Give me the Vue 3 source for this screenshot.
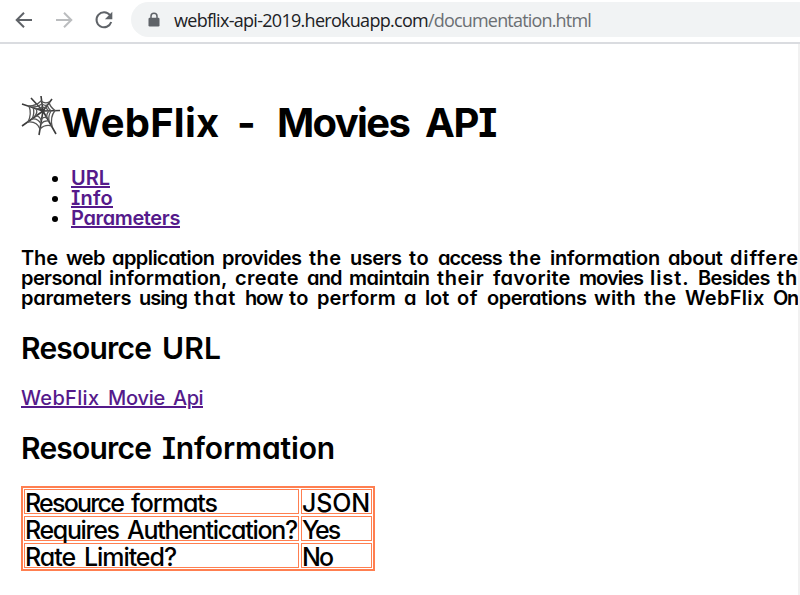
<script setup>
import { h, nextTick, onMounted } from 'vue'

// A line of text whose words take the given widths, trailing space included.
const Fit = (props) => {
  const words = props.text.split(' ')
  return h(
    'span',
    words.map((word, i) =>
      h('span', { 'data-width': props.widths[i] }, i < words.length - 1 ? `${word} ` : word),
    ),
  )
}
Fit.props = ['text', 'widths']

const links = [
  { text: 'URL', widths: [39] },
  { text: 'Info', widths: [42] },
  { text: 'Parameters', widths: [109] },
]
const intro = [
  {
    text: 'The web application provides the users to access the information about differe',
    widths: [45, 46, 110, 87, 41, 59, 29, 71, 41, 118, 62, 69],
  },
  {
    text: 'personal information, create and maintain their favorite movies list. Besides th',
    widths: [88, 126, 72, 42, 88, 56, 86, 71, 48, 79, 21],
  },
  {
    text: 'parameters using that how to perform a lot of operations with the WebFlix On',
    widths: [118, 55, 51, 44, 28, 87, 21, 32, 30, 107, 50, 41, 88, 25],
  },
]
const rows = [
  [{ text: 'Resource formats', widths: [106, 86] }, { text: 'JSON', widths: [68] }],
  [{ text: 'Requires Authentication?', widths: [102, 170] }, { text: 'Yes', widths: [37] }],
  [{ text: 'Rate Limited?', widths: [59, 92] }, { text: 'No', widths: [30] }],
]

// Spread the letters of each word so that it fills its measure.
function fitWords() {
  document.querySelectorAll('[data-width]').forEach((el) => {
    el.style.letterSpacing = '0px'
    const natural = el.getBoundingClientRect().width
    const spare = Number(el.dataset.width) - natural
    el.style.letterSpacing = `${spare / el.textContent.length}px`
  })
}

onMounted(async () => {
  await nextTick()
  fitWords()
  document.fonts.ready.then(fitWords)
})
</script>

<template>
  <div class="window">
    <header class="toolbar">
      <svg class="nav" viewBox="0 0 24 24"><path d="M20 12H5M12 4.7L4.7 12l7.3 7.3" /></svg>
      <svg class="nav disabled" viewBox="0 0 24 24"><path d="M4 12h15M12 4.7l7.3 7.3-7.3 7.3" /></svg>
      <svg class="nav" viewBox="0 0 24 24">
        <path d="M18 7.2A7.5 7.5 0 1 0 19.2 14" />
        <path class="solid" d="M20.3 3.8v7.4h-7.4z" />
      </svg>
      <div class="address">
        <svg class="lock" viewBox="0 0 12 16">
          <path class="shackle" d="M3 7V4.2a3 3 0 0 1 6 0V7" />
          <rect x="0.5" y="5.7" width="11" height="8.8" rx="1.2" />
        </svg>
        <span class="url"><span data-width="254">webflix-api-2019.herokuapp.com</span><span class="path" data-width="163">/documentation.html</span></span>
      </div>
    </header>
    <div class="viewport">
      <main class="page">
        <h1>
          <svg class="web" viewBox="0 0 40 40">
            <path class="spokes" d="M22 15L20 0M22 15L31 3M22 15L39 14.5M22 15L35 38M22 15L18 39M22 15L1 30M22 15L1 8M22 15L10 2" />
            <g class="threads">
              <path d="M20 5Q24 8 28 6Q29 11 34 14.5Q29 21 31 30Q24 28 19 33Q16 25 7 26Q11 18 8 10Q15 10 20 5Z" />
              <path d="M21 8Q24 10 26 9Q27 12 30 15Q27 20 28 25Q23 24 20 28Q17 22 11 23Q14 17 12 11Q17 11 21 8Z" />
              <path d="M21 11Q24 12 25 11Q26 14 28 15Q25 18 26 22Q22 20 20 24Q18 19 14 20Q17 16 15 13Q19 13 21 11Z" />
            </g>
          </svg>
          <Fit text="WebFlix - Movies API" :widths="[176, 40, 148, 71]" />
        </h1>
        <ul>
          <li v-for="link in links" :key="link.text">
            <a href="#"><Fit v-bind="link" /></a>
          </li>
        </ul>
        <div class="intro">
          <div v-for="line in intro" :key="line.text" class="line"><Fit v-bind="line" /></div>
        </div>
        <h2><Fit text="Resource URL" :widths="[141, 59]" /></h2>
        <div class="line"><a href="#"><Fit text="WebFlix Movie Api" :widths="[87, 65, 30]" /></a></div>
        <h2><Fit text="Resource Information" :widths="[141, 173]" /></h2>
        <div class="table">
          <template v-for="(row, i) in rows" :key="i">
            <div v-for="cell in row" :key="cell.text" class="cell"><Fit v-bind="cell" /></div>
          </template>
        </div>
      </main>
      <div class="scrollbar"></div>
    </div>
  </div>
</template>

<style>
body {
  margin: 0;
  background: #fff;
}
</style>

<style scoped>
.window {
  width: 800px;
  height: 595px;
  display: flex;
  flex-direction: column;
  overflow: hidden;
  background: #fff;
}
.toolbar {
  box-sizing: border-box;
  height: 44px;
  flex: none;
  display: flex;
  align-items: center;
  gap: 16px;
  padding: 0 0 3px 12px;
  border-bottom: 2px solid #dadce0;
}
.nav {
  width: 24px;
  height: 24px;
  flex: none;
  fill: none;
  stroke: #5f6368;
  stroke-width: 2;
}
.disabled {
  stroke: #bbbdbf;
}
.solid {
  fill: #5f6368;
  stroke: none;
}
.address {
  flex: 1;
  height: 35px;
  display: flex;
  align-items: center;
  margin-left: -1px;
  padding-left: 17px;
  border-radius: 18px 0 0 18px;
  background: #f1f3f4;
}
.lock {
  width: 12px;
  height: 16px;
  margin-right: 14px;
  fill: #5f6368;
}
.shackle {
  fill: none;
  stroke: #5f6368;
  stroke-width: 1.5;
}
.url {
  font: 18px/24px "Open Sans", "Noto Sans", sans-serif;
  color: #202124;
  white-space: nowrap;
}
.path {
  color: #6b6f73;
}
.viewport {
  flex: 1;
  display: flex;
  min-height: 0;
}
.page {
  flex: 1;
  min-width: 0;
  overflow: hidden;
  padding-left: 21px;
  font-family: "Comic Sans MS", Inter, sans-serif;
  font-feature-settings: "cv08", "cv11", "calt" 0;
  font-size: 20px;
  line-height: 20px;
  font-weight: 600;
  color: #000;
  white-space: nowrap;
  word-spacing: 3px;
}
.scrollbar {
  width: 2px;
  background: #f1f1f1;
}
h1 {
  display: flex;
  align-items: flex-start;
  margin: 0;
  padding-top: 52px;
  height: 72px;
  font-size: 40px;
  line-height: 54px;
  font-weight: 650;
  word-spacing: 8px;
}
.web {
  width: 40px;
  height: 40px;
  flex: none;
}
.spokes,
.threads {
  fill: none;
  stroke: #3c3c3c;
  stroke-width: 1.6;
}
.threads {
  stroke: #555;
  stroke-width: 1.3;
}
ul {
  margin: 0;
  padding: 0 0 0 50px;
}
li,
.line {
  height: 20px;
}
a {
  color: #551a8b;
  text-decoration: underline;
  text-decoration-thickness: 2px;
  text-underline-offset: 1px;
}
.intro {
  margin-top: 20px;
}
h2 {
  margin: 25px 0;
  font-size: 30px;
  line-height: 30px;
  font-weight: 600;
  word-spacing: 4px;
}
.line > a {
  font-weight: 500;
}
.table {
  width: max-content;
  display: grid;
  grid-template-columns: 275px 71px;
  grid-auto-rows: 25px;
  gap: 2px;
  margin-top: -2px;
  padding: 1px;
  border: 2px solid #ff7f50;
  font-size: 25px;
  line-height: 27px;
  font-weight: 550;
}
.cell {
  box-sizing: border-box;
  border: 1px solid #ff7f50;
}
</style>
